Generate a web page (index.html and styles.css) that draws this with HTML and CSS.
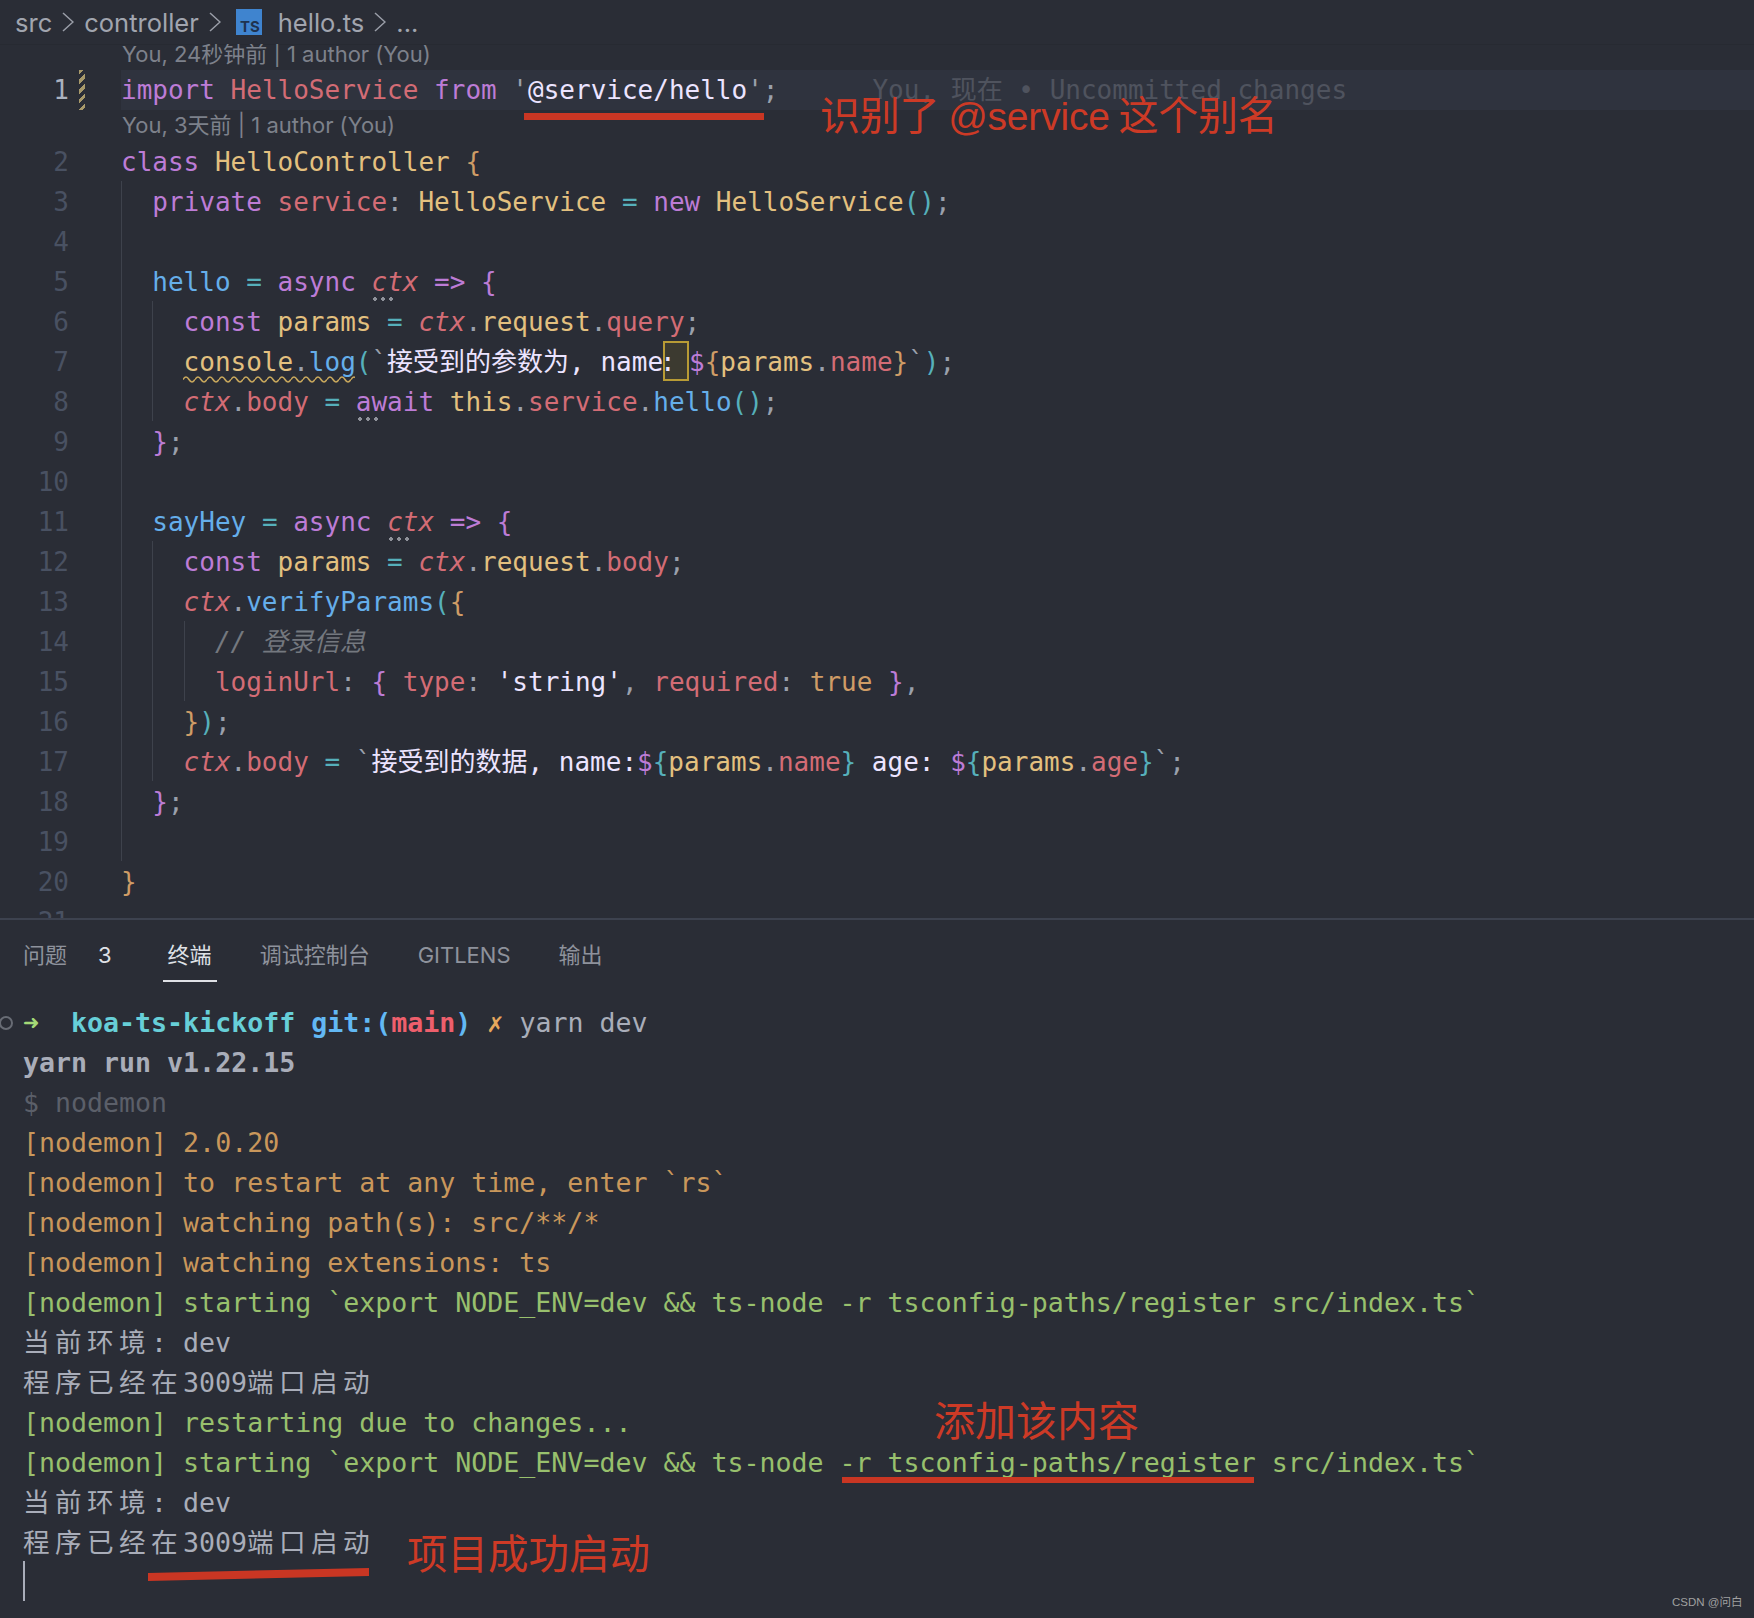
FILE: index.html
```html
<!DOCTYPE html>
<html lang="en">
<head>
    <meta charset="UTF-8">
    <meta name="viewport" content="width=device-width, initial-scale=1.0">
    <title>hello.ts</title>
    <link rel="stylesheet" href="styles.css">
</head>
<body>
    <div class="crumbs">
        <span>src</span>
        <svg class="chev" width="12" height="20" viewBox="0 0 12 20"><path d="M1 1 L11 10 L1 19"/></svg>
        <span>controller</span>
        <svg class="chev" width="12" height="20" viewBox="0 0 12 20"><path d="M1 1 L11 10 L1 19"/></svg>
        <span class="ts-icon">TS</span>
        <span class="file">hello.ts</span>
        <svg class="chev" width="12" height="20" viewBox="0 0 12 20"><path d="M1 1 L11 10 L1 19"/></svg>
        <span>...</span>
    </div>

    <div class="editor">
        <div class="lens lens-first">You, 24秒钟前 | 1 author (You)</div>
        <div class="row row-first"><span class="num now">1</span><span class="mark mod"></span><code class="code active"><span class="k">import</span> <span class="r">HelloService</span> <span class="k">from</span> <span class="p">'</span><span class="s">@service/hello</span><span class="p">';</span><span class="ghost">      You, 现在 • Uncommitted changes</span></code></div>
        <div class="lens">You, 3天前 | 1 author (You)</div>
        <div class="row"><span class="num">2</span><span class="mark"></span><code class="code"><span class="k">class</span> <span class="y">HelloController</span> <span class="o">{</span></code></div>
        <div class="row"><span class="num">3</span><span class="mark"></span><code class="code"><span class="g"></span><span class="k">private</span> <span class="r">service</span><span class="p">:</span> <span class="y">HelloService</span> <span class="c">=</span> <span class="k">new</span> <span class="y">HelloService</span><span class="c">()</span><span class="p">;</span></code></div>
        <div class="row"><span class="num">4</span><span class="mark"></span><code class="code"><span class="g"></span></code></div>
        <div class="row"><span class="num">5</span><span class="mark"></span><code class="code"><span class="g"></span><span class="b">hello</span> <span class="c">=</span> <span class="k">async</span> <span class="r i hint">ctx</span> <span class="k">=&gt;</span> <span class="k">{</span></code></div>
        <div class="row"><span class="num">6</span><span class="mark"></span><code class="code"><span class="g"></span><span class="g"></span><span class="k">const</span> <span class="y">params</span> <span class="c">=</span> <span class="r i">ctx</span><span class="p">.</span><span class="y">request</span><span class="p">.</span><span class="r">query</span><span class="p">;</span></code></div>
        <div class="row"><span class="num">7</span><span class="mark"></span><code class="code"><span class="g"></span><span class="g"></span><span class="wavy"><span class="y">console</span><span class="p">.</span><span class="b">log</span><svg class="squiggle" width="172" height="7" viewBox="0 0 172 7"><defs><pattern id="wave" width="12" height="7" patternUnits="userSpaceOnUse"><path d="M0 3.5 Q3 -1.5 6 3.5 T12 3.5"/></pattern></defs><rect width="172" height="7" fill="url(#wave)"/></svg></span><span class="c">(</span><span class="p">`</span><span class="s">接受到的参数为, name</span><span class="amb s">:</span><span class="k">$</span><span class="o">{</span><span class="y">params</span><span class="p">.</span><span class="r">name</span><span class="o">}</span><span class="p">`</span><span class="c">)</span><span class="p">;</span></code></div>
        <div class="row"><span class="num">8</span><span class="mark"></span><code class="code"><span class="g"></span><span class="g"></span><span class="r i">ctx</span><span class="p">.</span><span class="r">body</span> <span class="c">=</span> <span class="k hint">await</span> <span class="y">this</span><span class="p">.</span><span class="r">service</span><span class="p">.</span><span class="b">hello</span><span class="c">()</span><span class="p">;</span></code></div>
        <div class="row"><span class="num">9</span><span class="mark"></span><code class="code"><span class="g"></span><span class="k">}</span><span class="p">;</span></code></div>
        <div class="row"><span class="num">10</span><span class="mark"></span><code class="code"><span class="g"></span></code></div>
        <div class="row"><span class="num">11</span><span class="mark"></span><code class="code"><span class="g"></span><span class="b">sayHey</span> <span class="c">=</span> <span class="k">async</span> <span class="r i hint">ctx</span> <span class="k">=&gt;</span> <span class="k">{</span></code></div>
        <div class="row"><span class="num">12</span><span class="mark"></span><code class="code"><span class="g"></span><span class="g"></span><span class="k">const</span> <span class="y">params</span> <span class="c">=</span> <span class="r i">ctx</span><span class="p">.</span><span class="y">request</span><span class="p">.</span><span class="r">body</span><span class="p">;</span></code></div>
        <div class="row"><span class="num">13</span><span class="mark"></span><code class="code"><span class="g"></span><span class="g"></span><span class="r i">ctx</span><span class="p">.</span><span class="b">verifyParams</span><span class="c">(</span><span class="o">{</span></code></div>
        <div class="row"><span class="num">14</span><span class="mark"></span><code class="code"><span class="g"></span><span class="g"></span><span class="g"></span><span class="cm">// 登录信息</span></code></div>
        <div class="row"><span class="num">15</span><span class="mark"></span><code class="code"><span class="g"></span><span class="g"></span><span class="g"></span><span class="r">loginUrl</span><span class="p">:</span> <span class="k">{</span> <span class="r">type</span><span class="p">:</span> <span class="s">'string'</span><span class="p">,</span> <span class="r">required</span><span class="p">:</span> <span class="o">true</span> <span class="k">}</span><span class="p">,</span></code></div>
        <div class="row"><span class="num">16</span><span class="mark"></span><code class="code"><span class="g"></span><span class="g"></span><span class="o">}</span><span class="c">)</span><span class="p">;</span></code></div>
        <div class="row"><span class="num">17</span><span class="mark"></span><code class="code"><span class="g"></span><span class="g"></span><span class="r i">ctx</span><span class="p">.</span><span class="r">body</span> <span class="c">=</span> <span class="p">`</span><span class="s">接受到的数据, name:</span><span class="k">$</span><span class="c">{</span><span class="y">params</span><span class="p">.</span><span class="r">name</span><span class="c">}</span><span class="s"> age: </span><span class="k">$</span><span class="c">{</span><span class="y">params</span><span class="p">.</span><span class="r">age</span><span class="c">}</span><span class="p">`;</span></code></div>
        <div class="row"><span class="num">18</span><span class="mark"></span><code class="code"><span class="g"></span><span class="k">}</span><span class="p">;</span></code></div>
        <div class="row"><span class="num">19</span><span class="mark"></span><code class="code"><span class="g"></span></code></div>
        <div class="row"><span class="num">20</span><span class="mark"></span><code class="code"><span class="o">}</span></code></div>
        <div class="row"><span class="num">21</span><span class="mark"></span><code class="code"></code></div>
    </div>

    <div class="panel">
        <div class="tabs">
            <span class="tab">问题</span>
            <span class="count">3</span>
            <span class="tab current">终端</span>
            <span class="tab">调试控制台</span>
            <span class="tab">GITLENS</span>
            <span class="tab">输出</span>
        </div>
        <div class="term">
            <div class="line"><span class="ring"></span><span class="t-arrow">➜</span>  <span class="t-cyan">koa-ts-kickoff</span> <span class="t-blue">git:(</span><span class="t-red">main</span><span class="t-blue">)</span> <span class="t-x">✗</span> yarn dev</div>
            <div class="line t-bold">yarn run v1.22.15</div>
            <div class="line t-dim">$ nodemon</div>
            <div class="line t-org">[nodemon] 2.0.20</div>
            <div class="line t-org">[nodemon] to restart at any time, enter `rs`</div>
            <div class="line t-org">[nodemon] watching path(s): src/**/*</div>
            <div class="line t-org">[nodemon] watching extensions: ts</div>
            <div class="line t-grn">[nodemon] starting `export NODE_ENV=dev &amp;&amp; ts-node -r tsconfig-paths/register src/index.ts`</div>
            <div class="line"><span class="w">当前环境</span>: dev</div>
            <div class="line"><span class="w">程序已经在</span>3009<span class="w">端口启动</span></div>
            <div class="line t-grn">[nodemon] restarting due to changes...</div>
            <div class="line t-grn">[nodemon] starting `export NODE_ENV=dev &amp;&amp; ts-node -r tsconfig-paths/register src/index.ts`</div>
            <div class="line"><span class="w">当前环境</span>: dev</div>
            <div class="line"><span class="w">程序已经在</span>3009<span class="w">端口启动</span></div>
            <div class="line"><span class="cursor"></span></div>
        </div>
    </div>

    <!-- red notes drawn over the screenshot -->
    <div class="note note-alias">识别了 <span class="note-latin">@service</span> 这个别名</div>
    <div class="stroke stroke-alias"></div>
    <div class="note note-added">添加该内容</div>
    <div class="stroke stroke-added"></div>
    <div class="note note-ok">项目成功启动</div>
    <svg class="stroke-ok" width="222" height="15" viewBox="0 0 222 15"><polygon points="0,6 221,1 221,9 0,14"/></svg>
    <div class="watermark">CSDN @问白</div>
</body>
</html>
```

FILE: styles.css
```css
* {
    box-sizing: border-box;
}

html, body {
    margin: 0;
    height: 1618px;
    overflow: hidden;
}

body {
    position: relative;
    background-color: #2a2d36;
    font-family: "DejaVu Sans Mono", "Noto Sans CJK SC", monospace;
    color: #abb2bf;
}

/* breadcrumbs */
.crumbs {
    display: flex;
    align-items: center;
    gap: 10px;
    height: 44px;
    padding-left: 15px;
    background-color: #2a2d36;
    box-shadow: 0 1px 0 #272a32;
    font-family: Inter, "Noto Sans CJK SC", sans-serif;
    font-size: 25.5px;
    color: #a1a5af;
}

.chev path {
    fill: none;
    stroke: #9a9ea8;
    stroke-width: 1.5;
}

.ts-icon {
    display: flex;
    align-items: flex-end;
    justify-content: flex-end;
    width: 26px;
    height: 26px;
    margin-left: 5px;
    padding: 0 2px 1px 0;
    background-color: #3f84cf;
    font-size: 15px;
    font-weight: 700;
    line-height: 14px;
    color: #1f3350;
}

.file {
    margin-left: 6px;
}

/* editor */
.editor {
    height: 874px;
    overflow: hidden;
    font-size: 26px;
}

.lens {
    height: 31px;
    padding-left: 122px;
    font-family: Inter, "Noto Sans CJK SC", sans-serif;
    font-size: 22px;
    line-height: 31px;
    color: #7d818b;
}

.lens-first {
    height: 26px;
    line-height: 20px;
}

.row {
    display: flex;
    height: 40px;
    line-height: 42px;
}

.row-first {
    line-height: 40px;
}

.num {
    width: 69px;
    text-align: right;
    color: #495162;
}

.num.now {
    color: #abb2bf;
}

.mark {
    width: 6px;
    height: 40px;
    margin: 0 36px 0 10px;
}

.mark.mod {
    background: repeating-linear-gradient(135deg, #a8996a 0 3px, #2a2d36 3px 7px);
}

.code {
    flex: 1;
    height: 40px;
    font-family: inherit;
    white-space: pre;
}

.code.active {
    background-color: #2f333e;
}

.g {
    display: inline-block;
    width: 31.3px;
    height: 40px;
    vertical-align: top;
    border-left: 1px solid #3e424c;
}

.k { color: #bd7cd6; }
.r { color: #d36c75; }
.y { color: #e3c07f; }
.c { color: #56b0bb; }
.b { color: #65aeea; }
.o { color: #cf9c66; }
.p { color: #9aa0ac; }
.s { color: #ece4ff; }
.i { font-style: italic; }

.cm {
    font-style: italic;
    color: #74787f;
}

.ghost {
    color: #4f535e;
}

.wavy {
    position: relative;
}

.squiggle {
    position: absolute;
    left: -1px;
    bottom: -6px;
}

.squiggle path {
    fill: none;
    stroke: #c9a85c;
    stroke-width: 1.5;
}

.amb {
    display: inline-block;
    width: 26px;
    height: 40px;
    line-height: 38px;
    vertical-align: top;
    background-color: #3c3a30;
    border: 2px solid #b89b35;
    text-indent: -5px;
}

.hint {
    position: relative;
}

.hint::after {
    content: "";
    position: absolute;
    left: 0;
    bottom: -4px;
    width: 24px;
    height: 4px;
    background: radial-gradient(circle, #8f929a 2px, transparent 2px) 0 0 / 8px 4px;
}

/* bottom panel */
.panel {
    border-top: 2px solid #3d424f;
}

.tabs {
    display: flex;
    height: 62px;
    padding-left: 18px;
    font-family: Inter, "Noto Sans CJK SC", sans-serif;
    font-size: 22px;
    line-height: 30px;
    color: #8e929c;
}

.tab {
    height: 62px;
    margin-right: 38px;
    padding: 20px 5px 0;
    border-bottom: 2px solid transparent;
}

.tab.current {
    color: #dfe1e6;
    border-bottom-color: #dfe1e6;
}

.count {
    margin: 0 51px 0 -12px;
    padding-top: 20px;
    color: #dfe1e6;
}

.term {
    padding: 19px 0 0 23px;
    font-size: 26.6px;
    color: #a9adb9;
}

.line {
    height: 40px;
    line-height: 43px;
    white-space: pre;
}

.ring {
    display: inline-block;
    width: 14px;
    height: 14px;
    margin: 0 10px 0 -24px;
    vertical-align: 2px;
    border: 2px solid #686c75;
    border-radius: 50%;
}

.w {
    letter-spacing: 5.4px;
}

.t-arrow { color: #a4d977; font-weight: 700; }
.t-cyan { color: #67cfd8; font-weight: 700; }
.t-blue { color: #62b8f4; font-weight: 700; }
.t-red { color: #ee5f6c; font-weight: 700; }
.t-x { color: #e6a75d; font-weight: 700; }
.t-bold { font-weight: 700; }
.t-dim { color: #5b5f69; }
.t-org { color: #c9975b; }
.t-grn { color: #98c06d; }

.cursor {
    display: inline-block;
    width: 2px;
    height: 40px;
    vertical-align: top;
    background-color: #a9adb9;
}

/* annotations */
.note {
    position: absolute;
    height: 50px;
    font-family: "Noto Sans CJK SC", sans-serif;
    font-size: 40px;
    line-height: 50px;
    white-space: pre;
    color: #cd3a26;
}

.note-latin {
    font-family: "Liberation Sans", sans-serif;
    font-size: 39px;
}

.note-alias { left: 820px; top: 88px; letter-spacing: -0.2px; }
.note-added { left: 934px; top: 1393px; font-size: 41px; }
.note-ok { left: 407px; top: 1527px; font-size: 40.5px; }

.stroke {
    position: absolute;
    background-color: #c93623;
}

.stroke-alias { left: 524px; top: 113px; width: 240px; height: 7px; }
.stroke-added { left: 842px; top: 1477px; width: 412px; height: 6px; }

.stroke-ok {
    position: absolute;
    left: 148px;
    top: 1567px;
    fill: #c93623;
}

.watermark {
    position: absolute;
    left: 1672px;
    top: 1594px;
    font-family: "Liberation Sans", "Noto Sans CJK SC", sans-serif;
    font-size: 11.5px;
    line-height: 16px;
    color: #a0a0a0;
}
```
